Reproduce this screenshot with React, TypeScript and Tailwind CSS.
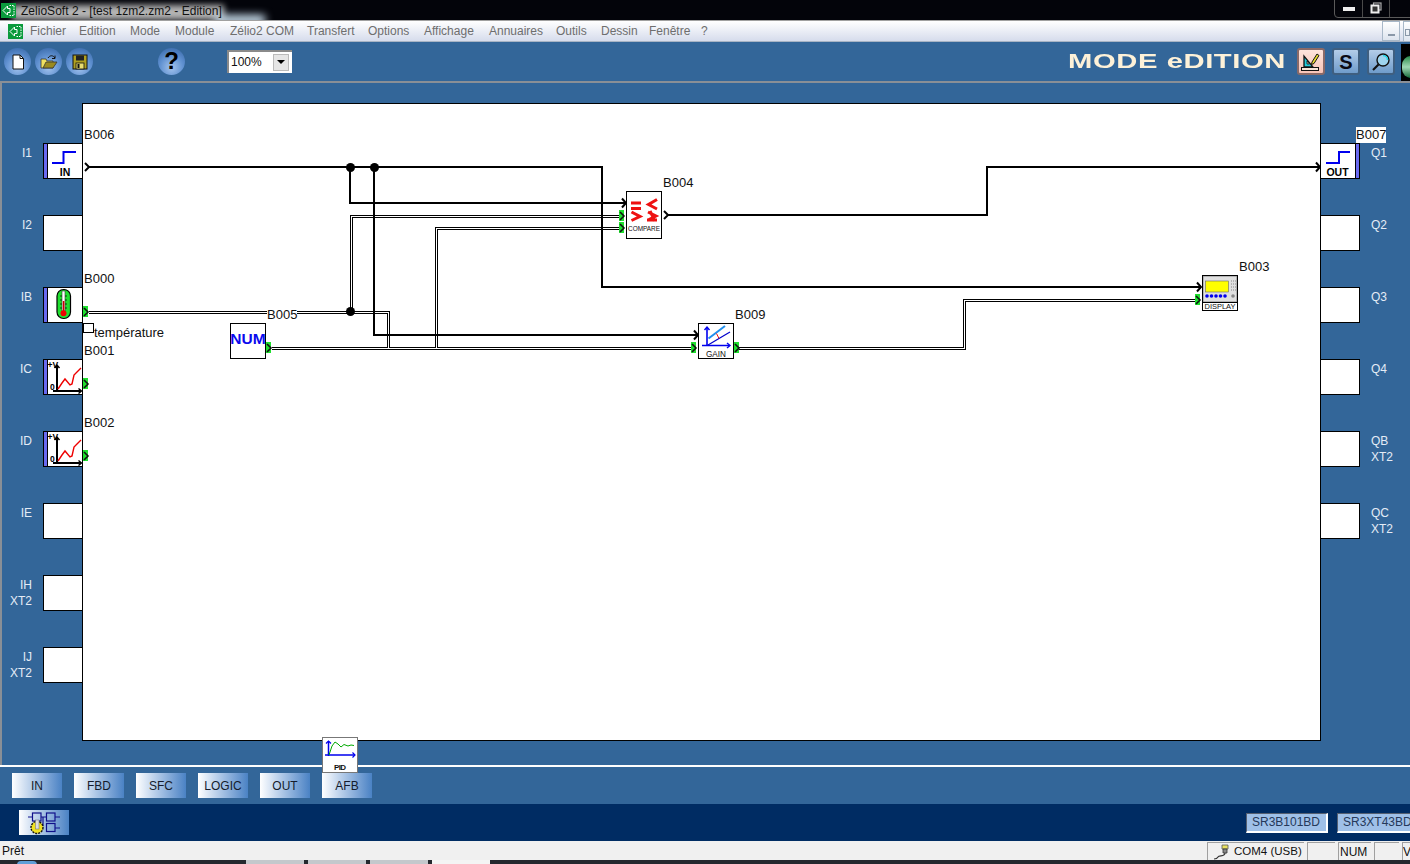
import React from "react";

const Arrow = ({ x, y }: { x: number; y: number }) => (
  <polyline points={`${x - 4},${y - 4.5} ${x},${y} ${x - 4},${y + 4.5}`} fill="none" stroke="#000" strokeWidth="2" />
);
const GreenPort = ({ x, y }: { x: number; y: number }) => (
  <g>
    <rect x={x} y={y - 6} width="5" height="11" fill="#1fe02f" />
    <polyline points={`${x + 1},${y - 4} ${x + 5},${y} ${x + 1},${y + 4}`} fill="none" stroke="#111" strokeWidth="1.6" />
  </g>
);

const Wires = () => {
  const thick = [
    "M88 167H602V287H1200",
    "M350 167V203H625",
    "M374 167V335H697",
    "M668 215H986.5V167H1319",
  ];
  const dbl = [
    "M89 312.5H388.5V348.5",
    "M351.5 312V216.5H622",
    "M436.5 348V228.5H622",
    "M272 348.5H694",
    "M738 348.5H964.5V300.5H1198",
  ];
  return (
    <svg className="absolute inset-0 w-[1237px] h-[636px]" viewBox="83 104 1237 636">
      <g fill="none" shapeRendering="crispEdges">
        {dbl.map((d) => (
          <path key={d} d={d} stroke="#000" strokeWidth="3" />
        ))}
        {dbl.map((d) => (
          <path key={d + "w"} d={d} stroke="#fff" strokeWidth="1" />
        ))}
        {thick.map((d) => (
          <path key={d} d={d} stroke="#000" strokeWidth="2" />
        ))}
      </g>
      <circle cx="350.5" cy="167.5" r="4.5" fill="#000" />
      <circle cx="374.5" cy="167.5" r="4.5" fill="#000" />
      <circle cx="350.5" cy="311.5" r="4.5" fill="#000" />
      <polyline points="85,163 89,167 85,171" fill="none" stroke="#000" strokeWidth="2" />
      <polyline points="664,211 668,215 664,219" fill="none" stroke="#000" strokeWidth="2" />
      <Arrow x={626} y={203} />
      <Arrow x={698} y={335} />
      <Arrow x={1201} y={287} />
      <Arrow x={1320} y={167} />
      <GreenPort x={83} y={312} />
      <GreenPort x={83} y={384} />
      <GreenPort x={83} y={456} />
      <GreenPort x={266} y={348} />
      <GreenPort x={619} y={216} />
      <GreenPort x={619} y={228} />
      <GreenPort x={691} y={348} />
      <GreenPort x={734} y={348} />
      <GreenPort x={1195} y={300} />
    </svg>
  );
};

const StepIn = () => (
  <svg viewBox="48 144 34 34" className="w-[34px] h-[34px]">
    <polyline points="52,163 63.5,163 63.5,152 76,152" fill="none" stroke="#0000ee" strokeWidth="2" />
    <text x="65" y="175.5" textAnchor="middle" fontSize="10.5" fontWeight="700" fontFamily="'Liberation Sans'" fill="#000">IN</text>
  </svg>
);
const StepOut = () => (
  <svg viewBox="1321 144 34 34" className="w-[34px] h-[34px]">
    <polyline points="1326,163 1339,163 1339,152 1350,152" fill="none" stroke="#0000ee" strokeWidth="2" />
    <text x="1337.5" y="175.5" textAnchor="middle" fontSize="10.5" fontWeight="700" fontFamily="'Liberation Sans'" fill="#000">OUT</text>
  </svg>
);
const Thermo = () => (
  <svg viewBox="48 288 34 34" className="w-[34px] h-[34px]">
    <rect x="57" y="289.5" width="13.5" height="29" rx="6.5" fill="#1fe02f" stroke="#000" strokeWidth="1.2" />
    <rect x="62" y="291" width="3" height="20" fill="#fff" stroke="#333" strokeWidth="0.6" />
    <rect x="62.8" y="301" width="1.6" height="10" fill="#cc0000" />
    <path d="M60 296h2M60 300h2M60 304h2M60 308h2M65 296h2M65 300h2M65 304h2M65 308h2" stroke="#111" strokeWidth="0.8" />
    <circle cx="63.5" cy="313.3" r="3" fill="#ee0000" />
  </svg>
);
const Chart = ({ y }: { y: number }) => (
  <svg viewBox={`48 ${y} 34 34`} className="w-[34px] h-[34px]">
    <g transform={`translate(0 ${y - 360})`}>
      <path d="M57 366V391.5M53 391H81" stroke="#000" strokeWidth="2" fill="none" />
      <path d="M54.5 368L57 365L59.5 368M78.5 388.5L81.5 391L78.5 393.5" stroke="#000" strokeWidth="1.4" fill="none" />
      <polyline points="58,389 62,383 65,379 70,385 72,384 74,375 77,372 81,368" stroke="#ee0000" strokeWidth="1.4" fill="none" />
      <text x="47.5" y="368" fontSize="8.5" fontWeight="700" fontFamily="'Liberation Sans'" fill="#000">+V</text>
      <text x="50" y="390" fontSize="8.5" fontWeight="700" fontFamily="'Liberation Sans'" fill="#000">0</text>
    </g>
  </svg>
);

const inPins: { l: string[]; icon?: React.ReactNode }[] = [
  { l: ["I1"], icon: <StepIn /> },
  { l: ["I2"] },
  { l: ["IB"], icon: <Thermo /> },
  { l: ["IC"], icon: <Chart y={360} /> },
  { l: ["ID"], icon: <Chart y={432} /> },
  { l: ["IE"] },
  { l: ["IH", "XT2"] },
  { l: ["IJ", "XT2"] },
];
const outPins: { l: string[]; icon?: React.ReactNode }[] = [
  { l: ["Q1"], icon: <StepOut /> },
  { l: ["Q2"] },
  { l: ["Q3"] },
  { l: ["Q4"] },
  { l: ["QB", "XT2"] },
  { l: ["QC", "XT2"] },
];

const Block = ({ className, children }: { className: string; children: React.ReactNode }) => (
  <div className={`absolute w-[36px] bg-white border border-black ${className}`}>{children}</div>
);

const Lbl = ({ className, children }: { className: string; children: React.ReactNode }) => (
  <span className={`absolute text-[13px] leading-[16px] text-[#111] whitespace-nowrap ${className}`}>{children}</span>
);

const AppIcon = ({ className }: { className: string }) => (
  <svg viewBox="0 0 15 15" className={className}>
    <rect width="15" height="15" fill="#0a9a3c" />
    <path d="M6.5 3L2 7.5L6.5 12V9.5H9V5.5H6.5Z" fill="none" stroke="#fff" strokeWidth="1" />
    <path d="M8.5 2.5H13V12.5H8.5" fill="none" stroke="#fff" strokeWidth="1" strokeDasharray="1.5 1" />
  </svg>
);

const Round = ({ children }: { children: React.ReactNode }) => (
  <div className="w-[27px] h-[27px] rounded-full flex items-center justify-center bg-[radial-gradient(circle_at_50%_72%,#a4c4ee_0%,#5f90d0_50%,#2f5f9f_100%)]">
    {children}
  </div>
);

const SquareBtn = ({ pink, children }: { pink?: boolean; children: React.ReactNode }) => (
  <div
    className={
      pink
        ? "w-[28px] h-[27px] rounded-[3px] flex items-center justify-center border-2 border-[#8a6a68] bg-linear-to-b from-[#fde4dc] to-[#f6c4b8]"
        : "w-[28px] h-[27px] rounded-[3px] flex items-center justify-center border-2 border-[#3f5f80] bg-linear-to-b from-[#b4cde8] to-[#6f9ccb]"
    }
  >
    {children}
  </div>
);

const menu: [string, string][] = [
  ["Fichier", "w-[49px]"],
  ["Edition", "w-[51px]"],
  ["Mode", "w-[45px]"],
  ["Module", "w-[55px]"],
  ["Zélio2 COM", "w-[77px]"],
  ["Transfert", "w-[61px]"],
  ["Options", "w-[56px]"],
  ["Affichage", "w-[65px]"],
  ["Annuaires", "w-[67px]"],
  ["Outils", "w-[45px]"],
  ["Dessin", "w-[48px]"],
  ["Fenêtre", "w-[52px]"],
  ["?", "w-[10px]"],
];
const tabs = ["IN", "FBD", "SFC", "LOGIC", "OUT", "AFB"];

const Pane = ({ className, children }: { className: string; children?: React.ReactNode }) => (
  <div className={`h-[18px] self-end flex items-center whitespace-nowrap border-t border-l border-[#a0a0a0] text-[12px] text-[#111] ${className}`}>{children}</div>
);

export default function App() {
  return (
    <div className="w-[1410px] h-[864px] overflow-hidden flex flex-col font-['Liberation_Sans',Arial,sans-serif] bg-[#336699]">
      {/* title bar */}
      <div className="relative h-[21px] shrink-0 bg-[#03040a] border-b border-[#a0a0a0] flex items-center overflow-hidden">
        <div className="absolute left-[12px] top-[5px] w-[212px] h-[15px] bg-[#b4b4b4] blur-[3px]" />
        <div className="absolute left-[215px] top-[15px] w-[50px] h-[10px] bg-[#cfe4f4] blur-[4px]" />
        <AppIcon className="relative w-[15px] h-[15px] ml-[1px] mt-[1px]" />
        <span className="relative ml-[5px] mt-[1px] text-[12px] tracking-[0.02px] text-[#111]">ZelioSoft 2 - [test 1zm2.zm2 - Edition]</span>
        <div className="absolute left-[1334px] top-[-2px] w-[90px] h-[20px] rounded-b-[4px] border border-[#5a5a5a] flex">
          <div className="w-[28px] border-r border-[#4a4a4a] flex items-center justify-center">
            <div className="w-[12px] h-[4px] bg-[#eee] mt-[2px]" />
          </div>
          <div className="w-[27px] border-r border-[#4a4a4a] flex items-center justify-center">
            <svg viewBox="0 0 12 12" className="w-[12px] h-[12px] mt-[-1px]">
              <rect x="3.5" y="1" width="7.5" height="7" fill="none" stroke="#aaa" strokeWidth="1.2" />
              <rect x="1.5" y="3.5" width="7" height="7" fill="#333" stroke="#eee" strokeWidth="2" />
            </svg>
          </div>
        </div>
      </div>

      {/* menu bar */}
      <div className="relative h-[21px] shrink-0 flex items-center bg-linear-to-b from-white to-[#d6dcec] border-b border-[#a8b4c4]">
        <AppIcon className="absolute left-[8px] top-[3px] w-[15px] h-[15px]" />
        <div className="flex pl-[30px] text-[12px] text-[#6e6e6e]">
          {menu.map(([m, w]) => (
            <span key={m} className={w}>{m}</span>
          ))}
        </div>
        <div className="ml-auto flex gap-[3px] h-full">
          <div className="w-[18px] border border-[#a8b8c8] bg-linear-to-b from-white to-[#dde4ee] flex items-end justify-center pb-[4px]">
            <div className="w-[7px] h-[2px] bg-[#8a98a8]" />
          </div>
          <div className="w-[7px] border-l border-t border-[#a8b8c8] bg-linear-to-b from-white to-[#dde4ee] flex items-center pl-[1px]">
            <div className="w-[6px] h-[7px] border border-[#8a98a8] mt-[2px]" />
          </div>
        </div>
      </div>

      {/* toolbar */}
      <div className="h-[39px] shrink-0 flex items-center pl-[4px] bg-[#336699]">
        <div className="flex gap-[4px]">
          <Round>
            <svg viewBox="0 0 14 16" className="w-[14px] h-[16px]">
              <path d="M2 1H9L12.5 4.5V15H2Z" fill="#fff" stroke="#111" strokeWidth="1" />
              <path d="M9 1V4.5H12.5" fill="none" stroke="#111" strokeWidth="1" />
            </svg>
          </Round>
          <Round>
            <svg viewBox="0 0 18 16" className="w-[18px] h-[16px]">
              <path d="M1 5H6L7 7H13V14H1Z" fill="#f0e060" stroke="#333" strokeWidth="0.8" />
              <path d="M3 14L6 8H17L13 14Z" fill="#9a8a20" stroke="#333" strokeWidth="0.8" />
              <path d="M8 4C10 1 13 1 15 4M15 1.5V4.5H12" fill="none" stroke="#111" strokeWidth="1" />
            </svg>
          </Round>
          <Round>
            <svg viewBox="0 0 16 16" className="w-[16px] h-[16px]">
              <rect x="1" y="1" width="14" height="14" fill="#b0a020" stroke="#111" strokeWidth="1" />
              <rect x="4" y="1.5" width="8" height="5" fill="#222" />
              <rect x="4" y="9" width="8" height="6" fill="#e8dc70" stroke="#111" strokeWidth="0.8" />
              <rect x="5.5" y="10" width="2" height="4" fill="#111" />
            </svg>
          </Round>
        </div>
        <div className="ml-[65px]">
          <Round>
            <span className="font-bold text-[24px] leading-none text-black mt-[-2px]">?</span>
          </Round>
        </div>
        <div className="ml-[42px] w-[65px] h-[23px] bg-white border-t-2 border-l-2 border-[#8a8a8a] flex items-center">
          <span className="ml-[2px] mt-[-2px] text-[12px] text-[#111] flex-1">100%</span>
          <div className="w-[16px] h-[17px] mr-[3px] mt-[-1px] bg-[#e6e6e6] border border-[#bbb] flex items-center justify-center">
            <div className="w-0 h-0 border-x-[4px] border-x-transparent border-t-[4px] border-t-black" />
          </div>
        </div>
        <div className="ml-auto flex items-center h-full">
          <div className="w-[217px] mr-[12px] h-[20px] mt-[-2px] flex items-center">
            <span className="origin-left scale-x-[1.46] font-bold text-[20px] leading-[20px] tracking-[0.4px] text-[#fdf1d8] whitespace-nowrap">
              MODE eDITION
            </span>
          </div>
          <div className="flex gap-[7px]">
            <SquareBtn pink>
              <svg viewBox="0 0 22 20" className="w-[22px] h-[20px]">
                <path d="M4 15V4L13 15Z" fill="#22c8d8" stroke="#111" strokeWidth="1.3" />
                <path d="M7 12V9L9.5 12Z" fill="#f6c4b8" stroke="#111" strokeWidth="0.8" />
                <path d="M12 10L17 2L19 3.5L14 11.5L11.5 12.5Z" fill="#e8dc30" stroke="#111" strokeWidth="1" />
                <rect x="1.5" y="15.5" width="17" height="3" fill="#f6e4d8" stroke="#111" strokeWidth="1" />
              </svg>
            </SquareBtn>
            <SquareBtn>
              <span className="font-bold text-[20px] leading-none text-[#0a0a14]">S</span>
            </SquareBtn>
            <SquareBtn>
              <svg viewBox="0 0 22 20" className="w-[22px] h-[20px]">
                <circle cx="13" cy="8" r="6" fill="#9fd4ee" stroke="#111" strokeWidth="1.4" />
                <path d="M13 3.5A4.5 4.5 0 0 1 17.5 8" fill="none" stroke="#22d8e8" strokeWidth="1.5" />
                <path d="M8.5 12.5L3 18" stroke="#111" strokeWidth="2.2" />
              </svg>
            </SquareBtn>
          </div>
          <div className="ml-[6px] w-[9px] h-[37px] self-end bg-black overflow-hidden flex items-center">
            <div className="w-[18px] h-[22px] mt-[8px] ml-[1px] shrink-0 rounded-full bg-linear-to-b from-[#1f8a4a] via-[#9fd8b4] to-[#0a6a3a]" />
          </div>
        </div>
      </div>

      {/* editor area */}
      <div className="h-[684px] shrink-0 flex pt-[20px] bg-[#336699] border-t-2 border-l-2 border-[#8a8f96]">
        <div className="w-[80px] shrink-0 flex flex-col gap-[36px] pt-[40px]">
          {inPins.map((p) => (
            <div key={p.l[0]} className="h-[36px] flex">
              <div className="w-[30px] text-right text-[12px] leading-[16px] pt-[2px] text-[#e4ecf6]">
                {p.l.map((t) => (
                  <div key={t}>{t}</div>
                ))}
              </div>
              <div className="ml-[11px] w-[39px] h-[36px] flex bg-white border-y border-l border-black">
                {p.icon && <div className="w-[3px] bg-[#6a6af0]" />}
                {p.icon && <div className="w-[1px] bg-black" />}
                {p.icon}
              </div>
            </div>
          ))}
        </div>

        <div className="relative w-[1239px] h-[638px] shrink-0 bg-white border border-black">
          <Wires />
          <Lbl className="left-[1px] top-[23px]">B006</Lbl>
          <Lbl className="left-[1px] top-[167px]">B000</Lbl>
          <div className="absolute left-0 top-[219px] w-[11px] h-[10px] border border-black bg-white" />
          <Lbl className="left-[11px] top-[221px]">température</Lbl>
          <Lbl className="left-[1px] top-[239px]">B001</Lbl>
          <Lbl className="left-[1px] top-[311px]">B002</Lbl>
          <Lbl className="left-[184px] top-[203px] bg-white">B005</Lbl>
          <Lbl className="left-[580px] top-[71px]">B004</Lbl>
          <Lbl className="left-[652px] top-[203px]">B009</Lbl>
          <Lbl className="left-[1156px] top-[155px]">B003</Lbl>
          <Lbl className="left-[1273px] top-[23px] bg-white">B007</Lbl>

          <Block className="left-[147px] top-[219px] h-[36px] flex items-center justify-center pb-[5px]">
            <span className="font-bold text-[15.5px] leading-none text-[#0a0aee]">NUM</span>
          </Block>

          <Block className="left-[543px] top-[87px] h-[48px]">
            <svg viewBox="627 192 34 46" className="w-[34px] h-[46px]">
              <g stroke="#ee1111" fill="none" strokeWidth="3">
                <path d="M631 203H641M631 208.5H641" />
                <path d="M631.5 212L640 216.5L631.5 220.5" />
                <path d="M657 199.5L648.5 204.5L657 209" />
                <path d="M648 212L656 216L648 220M647 220L657 220M650 211L655 221" />
              </g>
              <text x="644" y="231" textAnchor="middle" fontSize="8" textLength="32" lengthAdjust="spacingAndGlyphs" fontFamily="'Liberation Sans'" fill="#111">COMPARE</text>
            </svg>
          </Block>

          <Block className="left-[615px] top-[219px] h-[36px]">
            <svg viewBox="699 324 34 34" className="w-[34px] h-[34px]">
              <path d="M707 328V346M702 345.5H729" stroke="#0000ee" strokeWidth="1.6" fill="none" />
              <path d="M704.5 330L707 327L709.5 330M727 343L730 345.5L727 348" stroke="#0000ee" strokeWidth="1.4" fill="none" />
              <path d="M708.5 338.5L725 326" stroke="#1f8fee" strokeWidth="2" />
              <path d="M708 345L730 332" stroke="#0000cc" strokeWidth="1.2" />
              <path d="M716.5 333.5L719 338.5" stroke="#ee1111" strokeWidth="1" />
              <text x="716" y="356.5" textAnchor="middle" fontSize="8.5" textLength="20" lengthAdjust="spacingAndGlyphs" fontFamily="'Liberation Sans'" fill="#111">GAIN</text>
            </svg>
          </Block>

          <Block className="left-[1119px] top-[171px] h-[36px]">
            <svg viewBox="1203 276 34 34" className="w-[34px] h-[34px]">
              <rect x="1203" y="276" width="34" height="26" fill="#e0e0e0" stroke="#888" strokeWidth="1" />
              <rect x="1205.5" y="281" width="23" height="11" fill="#ffff00" stroke="#666" strokeWidth="0.6" />
              <path d="M1231 281H1236M1231 284H1236M1231 287H1236M1231 290H1236" stroke="#888" strokeWidth="1" strokeDasharray="1 1" />
              <g fill="#0000ee">
                <circle cx="1207" cy="296" r="1.8" />
                <circle cx="1211.5" cy="296" r="1.8" />
                <circle cx="1216" cy="296" r="1.8" />
                <circle cx="1220.5" cy="296" r="1.8" />
                <circle cx="1225" cy="296" r="1.8" />
              </g>
              <circle cx="1233" cy="296" r="1.8" fill="#888" />
              <path d="M1203 302.5H1237" stroke="#000" strokeWidth="1" />
              <text x="1220" y="309" textAnchor="middle" fontSize="8" textLength="31" lengthAdjust="spacingAndGlyphs" fontFamily="'Liberation Sans'" fill="#111">DISPLAY</text>
            </svg>
          </Block>
        </div>

        <div className="flex-1 flex flex-col gap-[36px] pt-[40px]">
          {outPins.map((p) => (
            <div key={p.l[0]} className="h-[36px] flex">
              <div className="w-[39px] h-[36px] flex bg-white border-y border-r border-black">
                {p.icon}
                {p.icon && <div className="w-[1px] bg-black" />}
                {p.icon && <div className="w-[3px] bg-[#6a6af0]" />}
              </div>
              <div className="ml-[11px] text-[12px] leading-[16px] pt-[2px] text-[#e4ecf6]">
                {p.l.map((t) => (
                  <div key={t}>{t}</div>
                ))}
              </div>
            </div>
          ))}
        </div>
      </div>

      {/* palette */}
      <div className="h-[39px] shrink-0 border-t-2 border-white flex gap-[12px] pl-[12px] pt-[6px] bg-[#336699]">
        {tabs.map((t) => (
          <div key={t} className="relative w-[50px] h-[25px] flex items-center justify-center text-[12px] text-[#141c2c] bg-linear-to-r from-white to-[#4a82c4]">
            {t}
            {t === "AFB" && (
              <div className="absolute left-0 bottom-[25px] w-[36px] h-[36px] bg-white border border-[#777]">
                <svg viewBox="323 738 34 34" className="w-[34px] h-[34px]">
                  <path d="M328.5 741V756M325 755H355" stroke="#0000ee" strokeWidth="1.5" fill="none" />
                  <path d="M326 743.5L328.5 741L331 743.5M352.5 752.5L355 755L352.5 757.5" stroke="#0000ee" strokeWidth="1.2" fill="none" />
                  <polyline points="329,755 332,746 335,742 338,744 341,747 344,744.5 348,746 351,745 354,745.5" fill="none" stroke="#00aa00" strokeWidth="1" />
                  <text x="340" y="770" textAnchor="middle" fontSize="8" fontWeight="700" textLength="12" fontFamily="'Liberation Sans'" fill="#111">PID</text>
                </svg>
              </div>
            )}
          </div>
        ))}
      </div>

      {/* module bar */}
      <div className="h-[37px] shrink-0 bg-[#002c63] flex items-center pl-[19px]">
        <div className="w-[50px] h-[25px] bg-linear-to-r from-white to-[#4a82c4]">
          <svg viewBox="19 810 50 25" className="w-[50px] h-[25px]">
            <g fill="none" stroke="#10108a" strokeWidth="1.2">
              <rect x="32.5" y="813" width="8.5" height="8" />
              <rect x="46.5" y="813" width="8.5" height="8" />
              <rect x="46.5" y="823.5" width="8.5" height="8" />
              <path d="M28 817H32.5M41 817H46.5M55 817H60M55 828H60M43 817V826" />
            </g>
            <circle cx="37" cy="827.5" r="6" fill="#f0e020" stroke="#111" strokeWidth="1.4" strokeDasharray="2 1" />
            <rect x="35.5" y="820" width="3.5" height="9" fill="#dcdcdc" stroke="#667" strokeWidth="0.5" />
          </svg>
        </div>
        <div className="ml-auto flex gap-[9px]">
          <div className="w-[82px] h-[20px] pl-[5px] flex items-center text-[12px] text-[#25395a] bg-[#9fc0e8] border-t border-l border-[#555f70] border-r-2 border-b-2 border-r-white border-b-white whitespace-nowrap">
            SR3B101BD
          </div>
          <div className="w-[73px] h-[20px] pl-[5px] flex items-center text-[12px] text-[#25395a] bg-[#9fc0e8] border-t border-l border-[#555f70] border-b-2 border-b-white whitespace-nowrap">
            SR3XT43BD
          </div>
        </div>
      </div>

      {/* status bar */}
      <div className="h-[19px] shrink-0 bg-[#f0f0f0] flex items-center pl-[2px]">
        <span className="text-[12px] text-[#111]">Prêt</span>
        <div className="ml-auto flex gap-[3px] h-full">
          <Pane className="w-[97px] pl-[5px]">
            <svg viewBox="0 0 18 16" className="w-[18px] h-[16px] shrink-0">
              <path d="M9 1H15V5H9Z" fill="#e8e060" stroke="#555" strokeWidth="0.8" />
              <path d="M10 5H14V9H10Z" fill="#888" stroke="#333" strokeWidth="0.8" />
              <path d="M12 9C12 13 6 11 5 13C4 15 2 15 1 15" fill="none" stroke="#333" strokeWidth="1.2" />
            </svg>
            <span className="ml-[3px] text-[11.5px]">COM4 (USB)</span>
          </Pane>
          <Pane className="w-[28px]" />
          <Pane className="w-[33px] pl-[1px]">NUM</Pane>
          <Pane className="w-[25px]" />
          <Pane className="w-[8px] overflow-hidden">V</Pane>
        </div>
      </div>

      {/* taskbar strip */}
      <div className="h-[4px] shrink-0 bg-[#24282e] flex relative">
        <div className="absolute left-[17px] top-[1px] w-[20px] h-[8px] rounded-full bg-[#5f9fd8]" />
        <div className="ml-[246px] flex gap-[4px]">
          <div className="w-[58px] h-full bg-[#c4c8cc]" />
          <div className="w-[58px] h-full bg-[#c4c8cc]" />
          <div className="w-[58px] h-full bg-[#c4c8cc]" />
          <div className="w-[58px] h-full bg-[#f4f4f4]" />
        </div>
      </div>
    </div>
  );
}
